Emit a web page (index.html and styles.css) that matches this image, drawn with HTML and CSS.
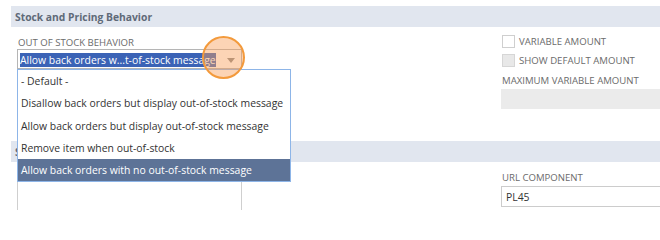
FILE: index.html
```html
<!DOCTYPE html>
<html>
<head>
<meta charset="utf-8">
<link rel="stylesheet" href="styles.css">
</head>
<body>
<div class="page">
  <div class="section-header"><span class="section-title">Stock and Pricing Behavior</span></div>
  <div class="cols first">
    <div class="col-left">
      <div class="field-label">OUT OF STOCK BEHAVIOR</div>
      <div class="select-wrap">
        <div class="select"><span class="sel-text">Allow back orders w...t-of-stock message</span><span class="arrow"></span></div>
        <div class="focus-ring"></div>
        <ul class="dropdown">
          <li>- Default -</li>
          <li>Disallow back orders but display out-of-stock message</li>
          <li>Allow back orders but display out-of-stock message</li>
          <li>Remove item when out-of-stock</li>
          <li class="active">Allow back orders with no out-of-stock message</li>
        </ul>
      </div>
    </div>
    <div class="col-right">
      <label class="check"><span class="box"></span>VARIABLE AMOUNT</label>
      <label class="check second"><span class="box disabled"></span>SHOW DEFAULT AMOUNT</label>
      <div class="field-label max">MAXIMUM VARIABLE AMOUNT</div>
      <div class="input disabled"></div>
    </div>
  </div>
  <div class="section-header"><span class="section-title">Search Engine Optimization</span></div>
  <div class="cols second-cols">
    <div class="col-left">
      <div class="textarea"></div>
    </div>
    <div class="col-right">
      <div class="field-label url">URL COMPONENT</div>
      <div class="input url-input">PL45</div>
    </div>
  </div>
</div>
</body>
</html>
```

FILE: styles.css
```css
html, body {
  margin: 0;
  padding: 0;
  background: #ffffff;
  overflow: hidden;
}
body {
  font-family: "Open Sans", "Liberation Sans", sans-serif;
  color: #333333;
  width: 660px;
  height: 210px;
}
.page {
  padding-top: 6px;
  padding-left: 11px;
}
.section-header {
  height: 21px;
  background: #e1e6ef;
  display: flex;
  align-items: center;
  padding-left: 4px;
}
.section-title {
  font-size: 10.3px;
  font-weight: 700;
  color: #5f6a78;
}
.cols {
  display: grid;
  grid-template-columns: 490px 1fr;
}
.cols.first {
  height: 114px;
}
.col-left {
  padding-left: 6px;
}
.field-label {
  font-size: 9.6px;
  line-height: 13px;
  color: #6b6b6b;
  padding-left: 1px;
}
.col-left > .field-label {
  margin-top: 9px;
}
.select-wrap {
  position: relative;
  width: 225px;
}
.select {
  box-sizing: border-box;
  height: 20px;
  border: 1px solid #b5b5b5;
  padding: 3px 2px 0 2px;
  display: flex;
  align-items: flex-start;
  background: #fff;
}
.sel-text {
  background: #3b63b6;
  color: #ffffff;
  font-size: 10.4px;
  line-height: 14px;
  white-space: nowrap;
}
.arrow {
  position: absolute;
  left: 210px;
  top: 9px;
  width: 0;
  height: 0;
  border-left: 4px solid transparent;
  border-right: 4px solid transparent;
  border-top: 5px solid #8a8a8a;
}
.focus-ring {
  position: absolute;
  left: 185px;
  top: -13px;
  width: 39px;
  height: 39px;
  border-radius: 50%;
  border: 2px solid #f39a3c;
  background: rgba(248, 160, 90, 0.45);
  z-index: 3;
}
.dropdown {
  position: absolute;
  left: 0;
  top: 20px;
  width: 274px;
  box-sizing: border-box;
  margin: 0;
  padding: 0;
  list-style: none;
  background: #ffffff;
  border: 1px solid #8db5e8;
  z-index: 2;
}
.dropdown li {
  height: 22.3px;
  line-height: 22.3px;
  padding-left: 3px;
  font-size: 10.4px;
  color: #333333;
  white-space: nowrap;
}
.dropdown li.active {
  background: #5d7397;
  color: #ffffff;
}
.col-right {
  display: flex;
  flex-direction: column;
  align-items: flex-start;
}
.check {
  display: flex;
  align-items: center;
  height: 14px;
  margin-top: 7px;
  font-size: 9.6px;
  color: #6b6b6b;
  padding-left: 1px;
}
.check.second {
  margin-top: 5px;
}
.box {
  box-sizing: border-box;
  width: 13px;
  height: 13px;
  border: 1px solid #cfcfcf;
  background: #ffffff;
  margin-right: 4px;
}
.box.disabled {
  background: #e8e8e8;
  border-color: #d6d6d6;
}
.field-label.max {
  margin-top: 7px;
  line-height: 14px;
}
.input {
  box-sizing: border-box;
  width: 170px;
  height: 20px;
  margin-top: 1px;
  border: 1px solid #cccccc;
  font-size: 10.4px;
  line-height: 19px;
  padding-left: 4px;
  color: #333;
}
.input.disabled {
  background: #ebebeb;
  border-color: #ebebeb;
}
.textarea {
  box-sizing: border-box;
  width: 225px;
  height: 60px;
  margin-top: 8px;
  border: 1px solid #cfcfcf;
}
.field-label.url {
  margin-top: 9px;
  line-height: 14px;
}
.url-input {
  height: 21px;
  line-height: 20px;
}
```
